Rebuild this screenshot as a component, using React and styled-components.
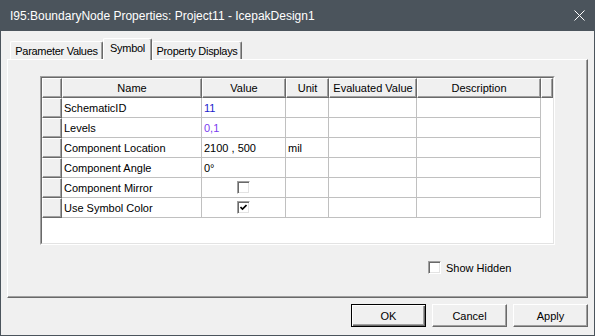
import React from "react";
import styled, { createGlobalStyle } from "styled-components";

const GlobalStyle = createGlobalStyle`
  html, body { margin: 0; padding: 0; background: #f0f0f0; }
  body { font-family: "Liberation Sans", Arial, sans-serif; }
  * { box-sizing: border-box; }
`;

const Window = styled.div`
  width: 595px;
  height: 336px;
  background: #f0f0f0;
  border: 1px solid #4b545c;
  border-top: none;
  display: flex;
  flex-direction: column;
`;

const TitleBar = styled.div`
  height: 31px;
  flex: none;
  margin: 0 -1px;
  background: #4b545c;
  color: #ffffff;
  display: flex;
  align-items: center;
  justify-content: space-between;
  padding: 0 10px 0 10px;
  font-size: 12px;
`;

const TitleText = styled.span`
  white-space: nowrap;
  padding-top: 1px;
`;

const Content = styled.div`
  flex: 1;
  display: flex;
  flex-direction: column;
  padding: 7px 6px 0 6px;
`;

const TabStrip = styled.div`
  display: flex;
  align-items: flex-end;
  height: 21px;
  padding-left: 3px;
`;

const Tab = styled.div`
  width: ${(p) => p.$w}px;
  height: ${(p) => (p.$active ? 22 : 18)}px;
  margin-bottom: ${(p) => (p.$active ? -1 : 0)}px;
  position: relative;
  z-index: ${(p) => (p.$active ? 1 : 0)};
  background: #f0f0f0;
  border-top: 1px solid #ffffff;
  border-left: 1px solid #ffffff;
  border-right: 1px solid #696969;
  box-shadow: inset -1px 0 0 #a0a0a0;
  border-radius: 2px 2px 0 0;
  display: flex;
  align-items: center;
  justify-content: center;
  padding-bottom: ${(p) => (p.$active ? 3 : 0)}px;
  font-size: 11px;
  letter-spacing: -0.3px;
  color: #000;
  white-space: nowrap;
`;

const Panel = styled.div`
  height: 239px;
  flex: none;
  border-top: 1px solid #ffffff;
  border-left: 1px solid #ffffff;
  border-right: 1px solid #696969;
  border-bottom: 1px solid #696969;
  box-shadow: inset -1px -1px 0 #a0a0a0;
  padding: 16px 0 0 32px;
  display: flex;
  flex-direction: column;
`;

const GridFrame = styled.div`
  width: 515px;
  height: 169px;
  border: 1px solid;
  border-color: #a0a0a0 #ffffff #ffffff #a0a0a0;
`;

const GridInner = styled.div`
  height: 100%;
  border: 1px solid;
  border-color: #696969 #e3e3e3 #e3e3e3 #696969;
  background: #ffffff;
  display: grid;
  grid-template-columns: 20px 140px 84px 43px 88px 124px 12px;
  grid-auto-rows: 20px;
  align-content: start;
  overflow: hidden;
`;

const HeadCell = styled.div`
  background: #f0f0f0;
  border-top: 1px solid #ffffff;
  border-left: 1px solid #ffffff;
  border-right: 1px solid #696969;
  border-bottom: 1px solid #696969;
  box-shadow: inset -1px -1px 0 #a0a0a0;
  display: flex;
  align-items: center;
  justify-content: center;
  font-size: 11px;
  color: #000;
  white-space: nowrap;
  overflow: hidden;
`;

const Cell = styled.div`
  border-right: ${(p) => (p.$filler ? "none" : "1px solid #c0c0c0")};
  border-bottom: ${(p) => (p.$filler ? "none" : "1px solid #c0c0c0")};
  display: flex;
  align-items: center;
  justify-content: ${(p) => (p.$center ? "center" : "flex-start")};
  padding-left: ${(p) => (p.$center ? 0 : 2)}px;
  font-size: 11px;
  color: ${(p) => p.$color || "#000"};
  white-space: nowrap;
  overflow: hidden;
`;

const Box = styled.span`
  width: 13px;
  height: 13px;
  display: inline-flex;
  align-items: center;
  justify-content: center;
  background: #ffffff;
  border: 1px solid;
  border-color: #a0a0a0 #ffffff #ffffff #a0a0a0;
  box-shadow: inset 1px 1px 0 #696969, inset -1px -1px 0 #e3e3e3;
  flex: none;
`;

const Footer = styled.div`
  display: flex;
  align-items: center;
  gap: 5px;
  margin-top: 16px;
  margin-left: 388px;
  font-size: 11px;
  color: #000;
`;

const ButtonRow = styled.div`
  display: flex;
  justify-content: flex-end;
  gap: 6px;
  padding-top: 6px;
`;

const Button = styled.div`
  width: 75px;
  height: 23px;
  background: #f0f0f0;
  border: 1px solid;
  border-color: ${(p) => (p.$default ? "#000000" : "#ffffff #696969 #696969 #ffffff")};
  box-shadow: ${(p) =>
    p.$default
      ? "inset 1px 1px 0 #ffffff, inset -1px -1px 0 #696969, inset -2px -2px 0 #a0a0a0"
      : "inset -1px -1px 0 #a0a0a0"};
  display: flex;
  align-items: center;
  justify-content: center;
  font-size: 11px;
  color: #000;
`;

const CheckBox = ({ checked }) => (
  <Box>
    {checked && (
      <svg width="7" height="7" viewBox="0 0 7 7">
        <path d="M0.5 3 L2.5 5 L6.5 1" fill="none" stroke="#000" strokeWidth="1.6" />
      </svg>
    )}
  </Box>
);

const CloseIcon = () => (
  <svg width="11" height="11" viewBox="0 0 11 11">
    <path d="M0.5 0.5 L10.5 10.5 M10.5 0.5 L0.5 10.5" stroke="#ffffff" strokeWidth="1" fill="none" />
  </svg>
);

const headers = ["", "Name", "Value", "Unit", "Evaluated Value", "Description", ""];

const rows = [
  { name: "SchematicID", value: "11", color: "#1c1ccc" },
  { name: "Levels", value: "0,1", color: "#7a3cf0" },
  { name: "Component Location", value: "2100 , 500", unit: "mil" },
  { name: "Component Angle", value: "0°" },
  { name: "Component Mirror", check: false },
  { name: "Use Symbol Color", check: true },
];

export default function App() {
  return (
    <>
      <GlobalStyle />
      <Window>
        <TitleBar>
          <TitleText>I95:BoundaryNode Properties: Project11 - IcepakDesign1</TitleText>
          <CloseIcon />
        </TitleBar>
        <Content>
          <TabStrip>
            <Tab $w={93}>Parameter Values</Tab>
            <Tab $w={49} $active>Symbol</Tab>
            <Tab $w={90}>Property Displays</Tab>
          </TabStrip>
          <Panel>
            <GridFrame>
              <GridInner>
                {headers.map((h, i) => (
                  <HeadCell key={"h" + i}>{h}</HeadCell>
                ))}
                {rows.map((r) => (
                  <React.Fragment key={r.name}>
                    <HeadCell />
                    <Cell>{r.name}</Cell>
                    {r.check !== undefined ? (
                      <Cell $center>
                        <CheckBox checked={r.check} />
                      </Cell>
                    ) : (
                      <Cell $color={r.color}>{r.value}</Cell>
                    )}
                    <Cell>{r.unit || ""}</Cell>
                    <Cell />
                    <Cell />
                    <Cell $filler />
                  </React.Fragment>
                ))}
              </GridInner>
            </GridFrame>
            <Footer>
              <CheckBox checked={false} />
              <span>Show Hidden</span>
            </Footer>
          </Panel>
          <ButtonRow>
            <Button $default>OK</Button>
            <Button>Cancel</Button>
            <Button>Apply</Button>
          </ButtonRow>
        </Content>
      </Window>
    </>
  );
}
